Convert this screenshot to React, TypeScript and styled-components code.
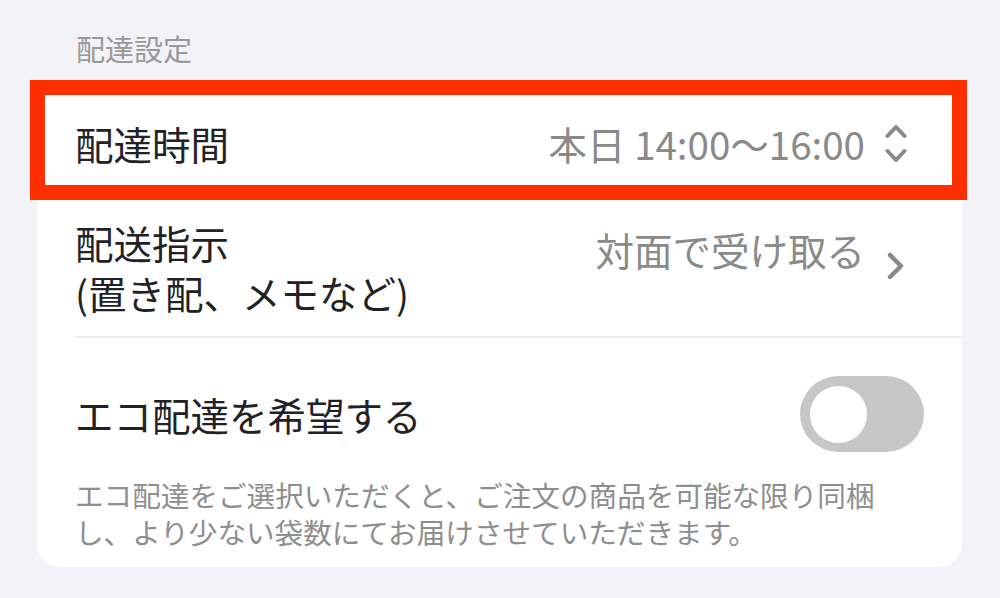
import React, { useState } from 'react';
import styled, { createGlobalStyle } from 'styled-components';

const GlobalStyle = createGlobalStyle`
    html, body {
        margin: 0;
        padding: 0;
        background: #f2f2f7;
    }
    body {
        font-family: 'Noto Sans CJK JP', 'Noto Sans', sans-serif;
    }
`;

const Page = styled.div`
    width: 1000px;
    height: 598px;
    box-sizing: border-box;
    padding: 28px 38px 0 37px;
    background: #f2f2f7;
`;

const SectionTitle = styled.div`
    padding-left: 39px;
    font-size: 29px;
    line-height: 40px;
    color: #999999;
    height: 58px;
`;

const Card = styled.div`
    position: relative;
    background: #ffffff;
    border-radius: 0 0 22px 22px;
`;

const Row = styled.div<{ $divider?: boolean; $tall?: boolean }>`
    position: relative;
    display: flex;
    align-items: ${(p) => (p.$tall ? 'flex-start' : 'center')};
    justify-content: space-between;
    margin-left: 38px;
    padding-right: 55px;
    border-bottom: ${(p) => (p.$divider ? '2px solid #ececf0' : 'none')};
`;

const Highlight = styled.div`
    position: absolute;
    top: -6px;
    bottom: -1px;
    left: -45px;
    right: -5px;
    border: 15px solid #ff2e00;
    pointer-events: none;
`;

const Label = styled.div`
    font-size: 38.5px;
    line-height: 50px;
    color: #222226;
`;

const Value = styled.div`
    display: flex;
    align-items: center;
    gap: 20px;
    font-size: 38.5px;
    line-height: 50px;
    color: #8a8a8a;
`;

const Chevron = styled.svg`
    flex: none;
    display: block;
`;

const ToggleTrack = styled.button<{ $on: boolean }>`
    position: relative;
    width: 124px;
    height: 76px;
    border: none;
    padding: 0;
    border-radius: 38px;
    background: ${(p) => (p.$on ? '#34c759' : '#c7c7c7')};
    cursor: pointer;
    flex: none;
`;

const ToggleKnob = styled.span<{ $on: boolean }>`
    position: absolute;
    top: 10px;
    left: ${(p) => (p.$on ? '58px' : '10px')};
    width: 57px;
    height: 57px;
    border-radius: 50%;
    background: #ffffff;
    transition: left 0.2s;
`;

const EcoBlock = styled.div`
    margin-left: 38px;
    padding: 38px 38px 17px 0;
`;

const Description = styled.p`
    margin: 24px 0 0;
    font-size: 28.6px;
    line-height: 37px;
    color: #8e8e8e;
`;

const App: React.FC = () => {
    const [eco, setEco] = useState(false);

    return (
        <>
            <GlobalStyle />
            <Page>
                <SectionTitle>配達設定</SectionTitle>
                <Card>
                    <Row style={{ height: 113 }}>
                        <Label>配達時間</Label>
                        <Value>
                            <span>本日 14:00〜16:00</span>
                            <Chevron width="22" height="40" viewBox="0 0 22 40">
                                <path
                                    d="M2.5 13 L11 4 L19.5 13 M2.5 28 L11 37 L19.5 28"
                                    fill="none"
                                    stroke="#8a8a8a"
                                    strokeWidth="4"
                                    strokeLinecap="round"
                                    strokeLinejoin="round"
                                />
                            </Chevron>
                        </Value>
                        <Highlight />
                    </Row>
                    <Row $divider $tall style={{ paddingTop: 18, paddingBottom: 19 }}>
                        <Label>
                            配送指示
                            <br />
                            (置き配、メモなど)
                        </Label>
                        <Value>
                            <span>対面で受け取る</span>
                            <Chevron width="22" height="30" viewBox="0 0 22 30" style={{ marginTop: 34 }}>
                                <path
                                    d="M5 4 L16 15 L5 26"
                                    fill="none"
                                    stroke="#8a8a8a"
                                    strokeWidth="4.5"
                                    strokeLinecap="round"
                                    strokeLinejoin="round"
                                />
                            </Chevron>
                        </Value>
                    </Row>
                    <EcoBlock>
                        <Row style={{ marginLeft: 0, paddingRight: 0 }}>
                            <Label>エコ配達を希望する</Label>
                            <ToggleTrack $on={eco} onClick={() => setEco(!eco)} aria-label="エコ配達">
                                <ToggleKnob $on={eco} />
                            </ToggleTrack>
                        </Row>
                        <Description>
                            エコ配達をご選択いただくと、ご注文の商品を可能な限り同梱
                            <br />
                            し、より少ない袋数にてお届けさせていただきます。
                        </Description>
                    </EcoBlock>
                </Card>
            </Page>
        </>
    );
};

export default App;
